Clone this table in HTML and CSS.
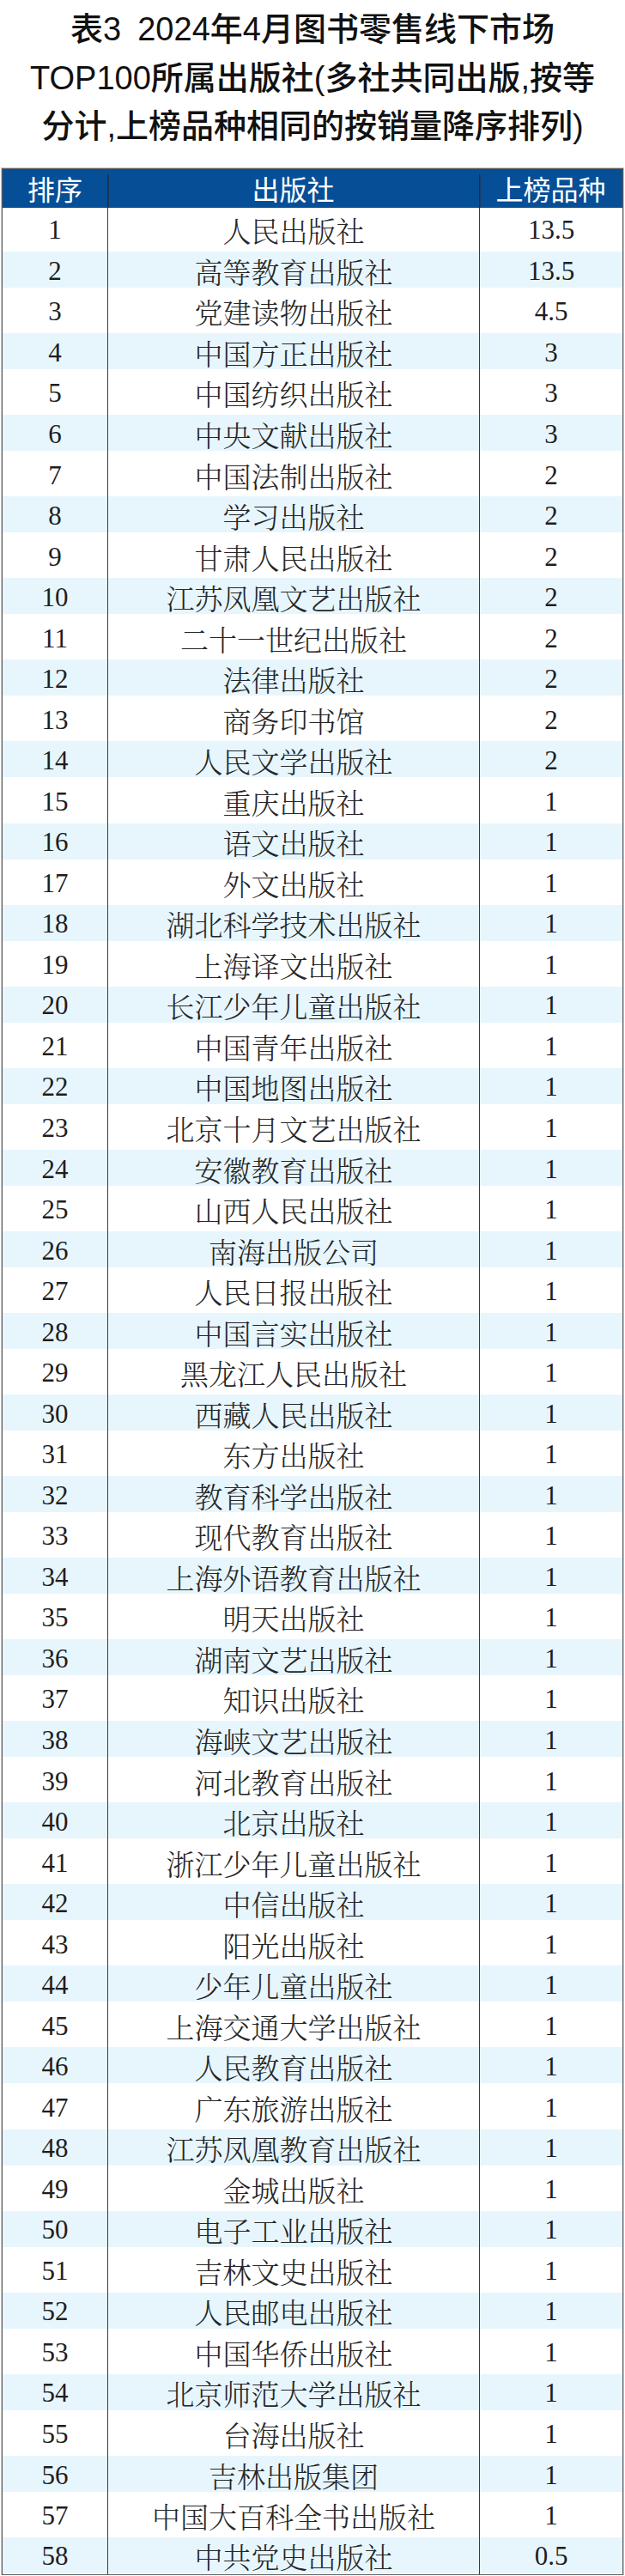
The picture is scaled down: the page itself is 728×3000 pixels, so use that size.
FILE: index.html
```html
<!DOCTYPE html>
<html lang="zh-CN">
<head>
<meta charset="utf-8">
<title>表3 2024年4月图书零售线下市场TOP100所属出版社</title>
<link rel="stylesheet" href="styles.css">
</head>
<body>
<h1 class="title">表3&ensp;2024年4月图书零售线下市场<br>TOP100所属出版社(多社共同出版,按等<br>分计,上榜品种相同的按销量降序排列)</h1>
<table class="rank">
<colgroup><col class="c-rank"><col class="c-name"><col class="c-num"></colgroup>
<thead>
<tr><th>排序</th><th class="div">出版社</th><th class="div">上榜品种</th></tr>
</thead>
<tbody>
<tr><td>1</td><td class="name">人民出版社</td><td class="num">13.5</td></tr>
<tr><td>2</td><td class="name">高等教育出版社</td><td class="num">13.5</td></tr>
<tr><td>3</td><td class="name">党建读物出版社</td><td class="num">4.5</td></tr>
<tr><td>4</td><td class="name">中国方正出版社</td><td class="num">3</td></tr>
<tr><td>5</td><td class="name">中国纺织出版社</td><td class="num">3</td></tr>
<tr><td>6</td><td class="name">中央文献出版社</td><td class="num">3</td></tr>
<tr><td>7</td><td class="name">中国法制出版社</td><td class="num">2</td></tr>
<tr><td>8</td><td class="name">学习出版社</td><td class="num">2</td></tr>
<tr><td>9</td><td class="name">甘肃人民出版社</td><td class="num">2</td></tr>
<tr><td>10</td><td class="name">江苏凤凰文艺出版社</td><td class="num">2</td></tr>
<tr><td>11</td><td class="name">二十一世纪出版社</td><td class="num">2</td></tr>
<tr><td>12</td><td class="name">法律出版社</td><td class="num">2</td></tr>
<tr><td>13</td><td class="name">商务印书馆</td><td class="num">2</td></tr>
<tr><td>14</td><td class="name">人民文学出版社</td><td class="num">2</td></tr>
<tr><td>15</td><td class="name">重庆出版社</td><td class="num">1</td></tr>
<tr><td>16</td><td class="name">语文出版社</td><td class="num">1</td></tr>
<tr><td>17</td><td class="name">外文出版社</td><td class="num">1</td></tr>
<tr><td>18</td><td class="name">湖北科学技术出版社</td><td class="num">1</td></tr>
<tr><td>19</td><td class="name">上海译文出版社</td><td class="num">1</td></tr>
<tr><td>20</td><td class="name">长江少年儿童出版社</td><td class="num">1</td></tr>
<tr><td>21</td><td class="name">中国青年出版社</td><td class="num">1</td></tr>
<tr><td>22</td><td class="name">中国地图出版社</td><td class="num">1</td></tr>
<tr><td>23</td><td class="name">北京十月文艺出版社</td><td class="num">1</td></tr>
<tr><td>24</td><td class="name">安徽教育出版社</td><td class="num">1</td></tr>
<tr><td>25</td><td class="name">山西人民出版社</td><td class="num">1</td></tr>
<tr><td>26</td><td class="name">南海出版公司</td><td class="num">1</td></tr>
<tr><td>27</td><td class="name">人民日报出版社</td><td class="num">1</td></tr>
<tr><td>28</td><td class="name">中国言实出版社</td><td class="num">1</td></tr>
<tr><td>29</td><td class="name">黑龙江人民出版社</td><td class="num">1</td></tr>
<tr><td>30</td><td class="name">西藏人民出版社</td><td class="num">1</td></tr>
<tr><td>31</td><td class="name">东方出版社</td><td class="num">1</td></tr>
<tr><td>32</td><td class="name">教育科学出版社</td><td class="num">1</td></tr>
<tr><td>33</td><td class="name">现代教育出版社</td><td class="num">1</td></tr>
<tr><td>34</td><td class="name">上海外语教育出版社</td><td class="num">1</td></tr>
<tr><td>35</td><td class="name">明天出版社</td><td class="num">1</td></tr>
<tr><td>36</td><td class="name">湖南文艺出版社</td><td class="num">1</td></tr>
<tr><td>37</td><td class="name">知识出版社</td><td class="num">1</td></tr>
<tr><td>38</td><td class="name">海峡文艺出版社</td><td class="num">1</td></tr>
<tr><td>39</td><td class="name">河北教育出版社</td><td class="num">1</td></tr>
<tr><td>40</td><td class="name">北京出版社</td><td class="num">1</td></tr>
<tr><td>41</td><td class="name">浙江少年儿童出版社</td><td class="num">1</td></tr>
<tr><td>42</td><td class="name">中信出版社</td><td class="num">1</td></tr>
<tr><td>43</td><td class="name">阳光出版社</td><td class="num">1</td></tr>
<tr><td>44</td><td class="name">少年儿童出版社</td><td class="num">1</td></tr>
<tr><td>45</td><td class="name">上海交通大学出版社</td><td class="num">1</td></tr>
<tr><td>46</td><td class="name">人民教育出版社</td><td class="num">1</td></tr>
<tr><td>47</td><td class="name">广东旅游出版社</td><td class="num">1</td></tr>
<tr><td>48</td><td class="name">江苏凤凰教育出版社</td><td class="num">1</td></tr>
<tr><td>49</td><td class="name">金城出版社</td><td class="num">1</td></tr>
<tr><td>50</td><td class="name">电子工业出版社</td><td class="num">1</td></tr>
<tr><td>51</td><td class="name">吉林文史出版社</td><td class="num">1</td></tr>
<tr><td>52</td><td class="name">人民邮电出版社</td><td class="num">1</td></tr>
<tr><td>53</td><td class="name">中国华侨出版社</td><td class="num">1</td></tr>
<tr><td>54</td><td class="name">北京师范大学出版社</td><td class="num">1</td></tr>
<tr><td>55</td><td class="name">台海出版社</td><td class="num">1</td></tr>
<tr><td>56</td><td class="name">吉林出版集团</td><td class="num">1</td></tr>
<tr><td>57</td><td class="name">中国大百科全书出版社</td><td class="num">1</td></tr>
<tr><td>58</td><td class="name">中共党史出版社</td><td class="num">0.5</td></tr>
</tbody>
</table>
</body>
</html>
```
FILE: styles.css
```css
html, body {
  margin: 0;
  padding: 0;
  background: #ffffff;
}

body {
  width: 728px;
}

.title {
  margin: 0 0 20px 0;
  padding-top: 6px;
  font-family: "Liberation Sans", "Noto Sans CJK SC", sans-serif;
  font-size: 38px;
  font-weight: 500;
  line-height: 56.5px;
  text-align: center;
  color: #111111;
  white-space: nowrap;
  letter-spacing: 0;
}

.rank {
  width: 724px;
  margin: 0 2px;
  table-layout: fixed;
  border-collapse: separate;
  border-spacing: 0;
  border: 1px solid #5c5c5c;
  box-shadow: 0 0 0 1px #c8c8c8;
}

.c-rank { width: 122px; }
.c-name { width: 433px; }
.c-num { width: 167px; }

.rank th {
  height: 44px;
  padding: 0 0 1px 0;
  background-color: #064f97;
  color: #ffffff;
  font-family: "Noto Sans CJK SC", sans-serif;
  font-size: 32px;
  font-weight: 400;
  line-height: 1;
  text-align: center;
  vertical-align: middle;
  white-space: nowrap;
}

.rank th.div {
  background-image: linear-gradient(#2b2b2b, #2b2b2b);
  background-size: 1.5px calc(100% - 6px);
  background-position: left bottom;
  background-repeat: no-repeat;
}

.rank td {
  height: 47.54px;
  padding: 0 0 3px 0;
  font-family: "Liberation Serif", "Noto Serif CJK SC", "Noto Sans CJK SC", serif;
  font-size: 31px;
  line-height: 1;
  color: #1e1e1e;
  text-align: center;
  vertical-align: middle;
  white-space: nowrap;
  box-sizing: border-box;
}

.rank td.name,
.rank td.num {
  border-left: 1.5px solid #3c3c3c;
}

.rank td.name {
  font-family: "Noto Serif CJK SC", "Noto Sans CJK SC", serif;
  font-size: 33px;
  font-weight: 300;
  color: #262626;
}

.rank tbody tr:first-child td {
  height: 51.6px;
  padding-top: 4px;
}

.rank tbody tr:last-child td {
  height: 43px;
  padding-bottom: 0;
}

.rank tbody tr:nth-child(even) td {
  background-image: linear-gradient(#e7f6fd, #e7f6fd);
  background-size: 100% 42px;
  background-position: left top;
  background-repeat: no-repeat;
}
```
